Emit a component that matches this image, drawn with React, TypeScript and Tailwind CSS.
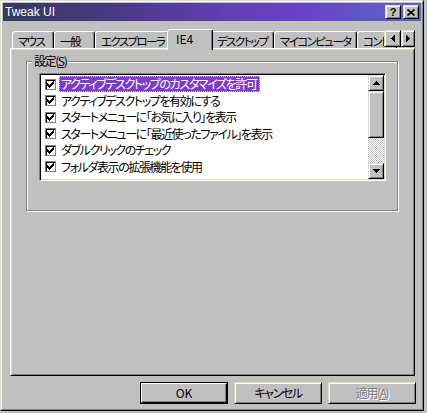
import React from "react";

// Tweak UI ダイアログ（IE4 タブ）

const jp = "font-['Noto_Sans_CJK_JP',sans-serif] [font-feature-settings:'palt'] tracking-[-1.4px]";

const tabs = [
  { label: "マウス", w: "w-[42px]" },
  { label: "一般", w: "w-[41px]" },
  { label: "エクスプローラ", w: "w-[74px]" },
  { label: "IE4", w: "w-[46px]", active: true },
  { label: "デスクトップ", w: "w-[63px]" },
  { label: "マイコンピュータ", w: "w-[83px]" },
  { label: "コントロール パネル", w: "w-[40px]" },
];

const items = [
  "アクティブデスクトップのカスタマイズを許可",
  "アクティブデスクトップを有効にする",
  "スタートメニューに「お気に入り」を表示",
  "スタートメニューに「最近使ったファイル」を表示",
  "ダブルクリックのチェック",
  "フォルダ表示の拡張機能を使用",
];

const bevel =
  "bg-[#c0c0c0] border border-t-[#dedec6] border-l-[#dedec6] border-r-black border-b-black shadow-[inset_1px_1px_#fff,inset_-1px_-1px_#808080]";

function CheckMark() {
  const tops = [2, 3, 4, 3, 2, 1, 0];
  return (
    <svg width="7" height="7" viewBox="0 0 7 7" shapeRendering="crispEdges">
      {tops.map((t, i) => (
        <rect key={i} x={i} y={t} width="1" height="3" fill="#000" />
      ))}
    </svg>
  );
}

function Arrow({ dir }: { dir: "up" | "down" | "left" | "right" }) {
  const d = {
    up: "M0 4 L3.5 0 L7 4 Z",
    down: "M0 0 L7 0 L3.5 4 Z",
    left: "M4 0 L4 7 L0 3.5 Z",
    right: "M0 0 L4 3.5 L0 7 Z",
  }[dir];
  const vert = dir === "up" || dir === "down";
  return (
    <svg width={vert ? 7 : 4} height={vert ? 4 : 7} viewBox={vert ? "0 0 7 4" : "0 0 4 7"} shapeRendering="crispEdges">
      <path d={d} fill="#000" />
    </svg>
  );
}

export default function App() {
  return (
    <div className="w-[427px] h-[413px] bg-[#c0c0c0] overflow-hidden">
      <div className="w-[424px] h-[411px] border border-t-[#dedec6] border-l-[#dedec6] border-r-black border-b-black">
        <div className="h-full border border-t-white border-l-white border-r-[#808080] border-b-[#808080] p-[1px] flex flex-col">
          {/* タイトルバー */}
          <div className="h-[18px] flex items-center justify-between pl-[2px] pr-[2px] bg-[linear-gradient(90deg,#38385c_0%,#4a3a8a_30%,#6240b6_55%,#6842c8_72%,#5c66c6_100%)]">
            <span className="text-white text-[12px] font-['Liberation_Sans',sans-serif] leading-none">Tweak UI</span>
            <div className="flex gap-[2px]">
              <div className={`${bevel} w-[16px] h-[14px] flex items-center justify-center`}>
                <span className="text-[11px] font-bold leading-none font-['Liberation_Sans',sans-serif] text-black">?</span>
              </div>
              <div className={`${bevel} w-[16px] h-[14px] flex items-center justify-center`}>
                <svg width="8" height="7" viewBox="0 0 8 7">
                  <path d="M0.5 0.5 L7.5 6.5 M7.5 0.5 L0.5 6.5" stroke="#000" strokeWidth="1.6" />
                </svg>
              </div>
            </div>
          </div>

          {/* タブとパネル */}
          <div className={`pl-[7px] pr-[6px] mt-[8px] ${jp}`}>
            <div className="relative flex items-end h-[19px] pl-[2px]">
              {tabs.map((t) =>
                t.active ? (
                  <div
                    key={t.label}
                    className={`${t.w} shrink-0 h-[21px] -mx-[2px] -mb-[2px] relative z-10 bg-[#c0c0c0] border-l border-t border-r border-l-white border-t-white border-r-black rounded-t-[3px] shadow-[inset_-1px_0_#808080] flex pt-[2px] pl-[8px] text-[12px] leading-[14px] text-black whitespace-nowrap tracking-normal`}
                  >
                    {t.label}
                  </div>
                ) : (
                  <div
                    key={t.label}
                    className={`${t.w} shrink-0 h-[17px] border-l border-t border-r border-l-white border-t-white border-r-black rounded-t-[3px] shadow-[inset_-1px_0_#808080] flex pt-[2px] pl-[5px] text-[11.5px] leading-[14px] tracking-[-1.6px] text-black whitespace-nowrap overflow-hidden`}
                  >
                    {t.label}
                  </div>
                )
              )}
              <div className="absolute right-0 bottom-[1px] flex bg-[#c0c0c0] z-20">
                <div className={`${bevel} w-[17px] h-[17px] flex items-center justify-center`}>
                  <Arrow dir="left" />
                </div>
                <div className={`${bevel} w-[14px] h-[17px] flex items-center justify-center`}>
                  <Arrow dir="right" />
                </div>
              </div>
            </div>

            <div className="h-[328px] border border-t-white border-l-white border-r-black border-b-black shadow-[inset_1px_1px_#dedec6,inset_-1px_-1px_#808080] pl-[15px] pt-[12px]">
              {/* グループボックス */}
              <div className="relative w-[372px] h-[150px] border border-[#808080] shadow-[1px_1px_#fff,inset_1px_1px_#fff] pl-[12px] pt-[11px]">
                <span className="absolute left-[5px] -top-[8px] px-[2px] bg-[#c0c0c0] text-[12px] leading-[14px] text-black">
                  設定(<span className="underline">S</span>)
                </span>

                {/* リストボックス */}
                <div className="w-[347px] h-[108px] border border-t-[#808080] border-l-[#808080] border-r-white border-b-white shadow-[inset_1px_1px_#000,inset_-1px_-1px_#dedec6] p-[1px] flex">
                  <div className="flex-1 bg-white pt-[1px]">
                    {items.map((label, i) => (
                      <div key={label} className="h-[16.5px] flex items-center pl-[4px]">
                        <div className="w-[11px] h-[11px] shrink-0 bg-white border border-[#808080] shadow-[inset_1px_1px_#000] flex items-center justify-center">
                          <CheckMark />
                        </div>
                        <span
                          className={`ml-[3px] pl-[1px] pr-[2px] h-[16px] flex items-center text-[12px] leading-none whitespace-nowrap ${
                            i === 0
                              ? "bg-[#7c3cc6] text-white border border-dotted border-[#d8d8a0]"
                              : "text-black border border-transparent"
                          }`}
                        >
                          {label}
                        </span>
                      </div>
                    ))}
                  </div>
                  {/* スクロールバー */}
                  <div className="w-[16px] flex flex-col">
                    <div className={`${bevel} h-[16px] flex items-center justify-center`}>
                      <Arrow dir="up" />
                    </div>
                    <div className={`${bevel} h-[47px]`} />
                    <div className="flex-1 bg-[repeating-conic-gradient(#fff_0_25%,#c0c0c0_0_50%)] bg-[length:2px_2px]" />
                    <div className={`${bevel} h-[16px] flex items-center justify-center`}>
                      <Arrow dir="down" />
                    </div>
                  </div>
                </div>
              </div>
            </div>
          </div>

          {/* ボタン */}
          <div className={`mt-[6px] flex justify-end gap-[6px] pr-[5px] text-[12px] ${jp}`}>
            <div className="w-[88px] h-[22px] border border-black">
              <div className="h-full border border-t-white border-l-white border-r-black border-b-black shadow-[inset_-1px_-1px_#808080] flex items-center justify-center text-black tracking-normal">
                OK
              </div>
            </div>
            <div className={`${bevel} w-[88px] h-[22px] flex items-center justify-center text-black`}>キャンセル</div>
            <div className={`${bevel} w-[88px] h-[22px] flex items-center justify-center text-[#808080] [text-shadow:1px_1px_0_#fff]`}>
              適用(<span className="underline">A</span>)
            </div>
          </div>
        </div>
      </div>
    </div>
  );
}
